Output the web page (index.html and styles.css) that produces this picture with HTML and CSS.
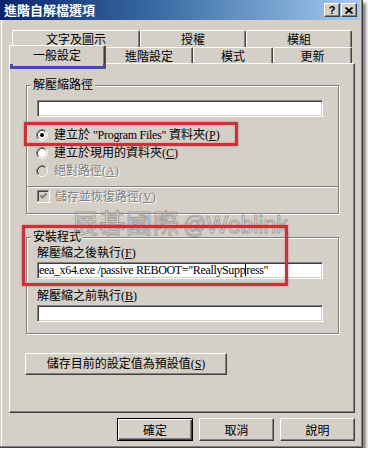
FILE: index.html
```html
<!DOCTYPE html>
<html>
<head>
<meta charset="utf-8">
<title>進階自解檔選項</title>
<link rel="stylesheet" href="styles.css">
</head>
<body>
<div class="window">
  <div class="titlebar">
    <span class="title">進階自解檔選項</span>
    <div class="tbtns">
      <span class="tbtn q">?</span>
      <span class="tbtn"><svg width="8" height="7" viewBox="0 0 8 7"><path d="M0.5 0.5 L7.5 6.5 M7.5 0.5 L0.5 6.5" stroke="#000" stroke-width="1.8" fill="none"/></svg></span>
    </div>
  </div>

  <div class="tabs">
    <div class="tabrow row1">
      <div class="tab w128">文字及圖示</div>
      <div class="tab w106">授權</div>
      <div class="tab w106">模組</div>
    </div>
    <div class="tabrow row2">
      <div class="tab sel w96">一般設定</div>
      <div class="tab w88">進階設定</div>
      <div class="tab w80">模式</div>
      <div class="tab w79">更新</div>
    </div>
  </div>

  <div class="panel">
    <div class="group g1">
      <div class="legend">解壓縮路徑</div>
      <div class="textbox"></div>
      <div class="radios">
        <div class="radio">
          <svg width="12" height="12" viewBox="0 0 12 12">
            <circle cx="6" cy="6" r="4.5" fill="#fff"/>
            <path d="M2.11 9.89 A5.5 5.5 0 0 1 9.89 2.11" stroke="#808080" fill="none"/>
            <path d="M9.89 2.11 A5.5 5.5 0 0 1 2.11 9.89" stroke="#fff" fill="none"/>
            <path d="M2.82 9.18 A4.5 4.5 0 0 1 9.18 2.82" stroke="#404040" fill="none"/>
            <path d="M9.18 2.82 A4.5 4.5 0 0 1 2.82 9.18" stroke="#d4d0c8" fill="none"/>
            <circle cx="6" cy="6" r="2" fill="#000"/>
          </svg>
          <span>建立於 <span class="narrow">"Program Files"</span> 資料夾(<u>P</u>)</span>
        </div>
        <div class="radio">
          <svg width="12" height="12" viewBox="0 0 12 12">
            <circle cx="6" cy="6" r="4.5" fill="#fff"/>
            <path d="M2.11 9.89 A5.5 5.5 0 0 1 9.89 2.11" stroke="#808080" fill="none"/>
            <path d="M9.89 2.11 A5.5 5.5 0 0 1 2.11 9.89" stroke="#fff" fill="none"/>
            <path d="M2.82 9.18 A4.5 4.5 0 0 1 9.18 2.82" stroke="#404040" fill="none"/>
            <path d="M9.18 2.82 A4.5 4.5 0 0 1 2.82 9.18" stroke="#d4d0c8" fill="none"/>
          </svg>
          <span>建立於現用的資料夾(<u>C</u>)</span>
        </div>
        <div class="radio disabled">
          <svg width="12" height="12" viewBox="0 0 12 12">
            <circle cx="6" cy="6" r="4.5" fill="#d4d0c8"/>
            <path d="M2.11 9.89 A5.5 5.5 0 0 1 9.89 2.11" stroke="#808080" fill="none"/>
            <path d="M9.89 2.11 A5.5 5.5 0 0 1 2.11 9.89" stroke="#fff" fill="none"/>
            <path d="M2.82 9.18 A4.5 4.5 0 0 1 9.18 2.82" stroke="#404040" fill="none"/>
            <path d="M9.18 2.82 A4.5 4.5 0 0 1 2.82 9.18" stroke="#d4d0c8" fill="none"/>
          </svg>
          <span>絕對路徑(<u>A</u>)</span>
        </div>
      </div>
      <div class="sep"></div>
      <div class="check disabled">
        <svg width="13" height="13" viewBox="0 0 13 13">
          <rect x="0" y="0" width="13" height="13" fill="#fff"/>
          <rect x="0" y="0" width="12" height="12" fill="#808080"/>
          <rect x="1" y="1" width="11" height="11" fill="#d4d0c8"/>
          <rect x="1" y="1" width="10" height="10" fill="#404040"/>
          <rect x="2" y="2" width="9" height="9" fill="#d4d0c8"/>
          <path d="M3.5 5.5 L5.5 7.5 L9.5 3.5" stroke="#808080" stroke-width="2" fill="none"/>
        </svg>
        <span>儲存並恢復路徑(<u>V</u>)</span>
      </div>
    </div>

    <div class="group g2">
      <div class="legend">安裝程式</div>
      <div class="label l1">解壓縮之後執行(<u>F</u>)</div>
      <div class="textbox tb1"><span class="val">eea_x64.exe /passive REBOOT="ReallySupp<span class="caret"></span>ress"</span></div>
      <div class="label l2">解壓縮之前執行(<u>B</u>)</div>
      <div class="textbox tb2"></div>
    </div>

    <div class="btn savebtn">儲存目前的設定值為預設值(<u>S</u>)</div>

    <div class="watermark"><span class="wm-cjk">展碁國際</span><span class="wm-lat">@Weblink</span></div>
  </div>

  <div class="buttons">
    <div class="btn dlg def">確定</div>
    <div class="btn dlg">取消</div>
    <div class="btn dlg">說明</div>
  </div>

  <div class="mark red r1"></div>
  <div class="mark red r2"></div>
  <div class="mark blue b1"></div>
</div>
</body>
</html>
```

FILE: styles.css
```css
html, body {
  margin: 0;
  padding: 0;
  background: #ffffff;
}
body {
  font-family: "Liberation Serif", "Noto Sans CJK TC", serif;
  font-size: 12px;
  color: #000;
}
u { text-decoration: underline; }

.window {
  position: relative;
  width: 363px;
  height: 448px;
  box-sizing: border-box;
  background: #d4d0c8;
  border-right: 1px solid #404040;
  border-bottom: 1px solid #404040;
  box-shadow: inset -1px -1px 0 #808080, inset 1px 0 0 #d4d0c8, inset 2px 0 0 #ffffff, 3px 3px 3px rgba(0,0,0,0.5);
}

.titlebar {
  height: 20px;
  margin-right: 2px;
  background: linear-gradient(to right, #0a246a 0%, #3a6ea5 45%, #a6caf0 100%);
  display: flex;
  align-items: center;
  justify-content: space-between;
  padding: 0 3px 0 4px;
}
.title {
  color: #fff;
  font-family: "Noto Sans CJK TC", sans-serif;
  font-weight: bold;
  font-size: 13px;
  line-height: 20px;
}
.tbtns {
  display: flex;
  gap: 1px;
}
.tbtn {
  width: 16px;
  height: 14px;
  box-sizing: border-box;
  background: #d4d0c8;
  border: 1px solid;
  border-color: #fff #404040 #404040 #fff;
  box-shadow: inset -1px -1px 0 #808080;
  display: flex;
  align-items: center;
  justify-content: center;
}
.tbtn.q {
  font-family: "Liberation Sans", sans-serif;
  font-weight: bold;
  font-size: 11px;
  line-height: 12px;
}

.tabs {
  margin: 10px 0 0 9px;
  width: 346px;
}
.tabrow {
  display: flex;
}
.row1 {
  height: 17px;
  padding-left: 3px;
}
.row2 {
  height: 16px;
}
.tab {
  box-sizing: border-box;
  height: 100%;
  border-top: 1px solid #fff;
  border-left: 1px solid #fff;
  border-right: 1px solid #404040;
  box-shadow: inset -1px 0 0 #808080;
  border-radius: 2px 2px 0 0;
  text-align: center;
  font-family: "Noto Sans CJK TC", sans-serif;
  line-height: 16px;
  background: #d4d0c8;
}
.row2 .tab { line-height: 15px; }
.tab.sel {
  height: 19px;
  margin-top: -2px;
  position: relative;
  z-index: 1;
  line-height: 18px;
}
.w128 { width: 128px; }
.w106 { width: 106px; }
.w96 { width: 96px; }
.w88 { width: 88px; }
.w80 { width: 80px; }
.w79 { width: 79px; }

.panel {
  position: relative;
  margin-left: 9px;
  width: 346px;
  height: 350px;
  box-sizing: border-box;
  border-top: 1px solid #fff;
  border-left: 1px solid #fff;
  border-right: 1px solid #404040;
  border-bottom: 1px solid #404040;
  box-shadow: inset -1px -1px 0 #808080;
  display: flow-root;
}

.group {
  margin-left: 16px;
  width: 313px;
  box-sizing: border-box;
  border: 1px solid #808080;
  box-shadow: inset 1px 1px 0 #fff, 1px 1px 0 #fff;
  display: flow-root;
}
.g1 { margin-top: 21px; }
.g2 { margin-top: 23px; }

.legend {
  width: fit-content;
  height: 13px;
  line-height: 13px;
  margin: -7px 0 0 4px;
  padding: 0 2px;
  background: #d4d0c8;
  position: relative;
}

.textbox {
  margin: 8px 0 0 10px;
  width: 286px;
  height: 17px;
  box-sizing: border-box;
  background: #fff;
  border: 1px solid;
  border-color: #808080 #fff #fff #808080;
  box-shadow: inset 1px 1px 0 #404040, inset -1px -1px 0 #d4d0c8;
  overflow: hidden;
  white-space: nowrap;
}
.val {
  display: block;
  padding-left: 1px;
  font-family: "Liberation Serif", serif;
  font-size: 12px;
  line-height: 15px;
  letter-spacing: -0.35px;
}
.caret {
  display: inline-block;
  width: 1px;
  height: 12px;
  background: #000;
  vertical-align: -2px;
}

.radios {
  margin: 9px 0 0 9px;
}
.radio {
  display: flex;
  align-items: center;
  gap: 6px;
  height: 18px;
  line-height: 14px;
}
.narrow { letter-spacing: -0.3px; }
.radio svg, .check svg { flex: none; display: block; }

.disabled span {
  color: #808080;
  text-shadow: 1px 1px 0 #fff;
}

.sep {
  margin-top: 6px;
  height: 1px;
  background: #808080;
  border-bottom: 1px solid #fff;
}
.check {
  display: flex;
  align-items: center;
  gap: 5px;
  height: 13px;
  margin: 2px 0 10px 10px;
  line-height: 14px;
}

.label {
  margin-left: 10px;
  height: 14px;
  line-height: 14px;
}
.l1 { margin-top: 2px; }
.tb1 { margin-top: 2px; }
.l2 { margin-top: 10px; }
.tb2 { margin-top: 2px; margin-bottom: 11px; }

.btn {
  box-sizing: border-box;
  background: #d4d0c8;
  border: 1px solid;
  border-color: #fff #404040 #404040 #fff;
  box-shadow: inset -1px -1px 0 #808080;
  text-align: center;
}
.savebtn {
  margin: 19px 0 0 15px;
  width: 202px;
  height: 22px;
  line-height: 20px;
}

.buttons {
  display: flex;
  justify-content: flex-end;
  gap: 6px;
  width: 355px;
  margin-top: 5px;
}
.dlg {
  width: 75px;
  height: 23px;
  line-height: 21px;
  font-family: "Noto Sans CJK TC", sans-serif;
}
.dlg.def {
  width: 76px;
  border: 1px solid #000;
  box-shadow: inset 1px 1px 0 #fff, inset -1px -1px 0 #404040, inset -2px -2px 0 #808080;
}

.watermark {
  position: absolute;
  left: 62px;
  top: 149px;
  height: 18px;
  white-space: nowrap;
  line-height: 18px;
  color: rgba(255,255,255,0.35);
  -webkit-text-stroke: 1px rgba(110,110,110,0.55);
  pointer-events: none;
}
.wm-cjk {
  font-family: "Noto Sans CJK TC", sans-serif;
  font-size: 26px;
  letter-spacing: 1px;
}
.wm-lat {
  font-family: "Liberation Sans", sans-serif;
  font-size: 23px;
  margin-left: 3px;
}

.mark {
  position: absolute;
  box-sizing: border-box;
  pointer-events: none;
}
.red {
  border: 3px solid #c9323a;
  box-shadow: 0 0 2px rgba(201,50,58,0.6), inset 0 0 2px rgba(201,50,58,0.5);
}
.r1 { left: 24px; top: 122px; width: 214px; height: 24px; }
.r2 { left: 22px; top: 225px; width: 266px; height: 61px; }
.blue {
  border: 3px solid #4848a8;
  left: 10px; top: 46px; width: 96px; height: 23px;
}
```
